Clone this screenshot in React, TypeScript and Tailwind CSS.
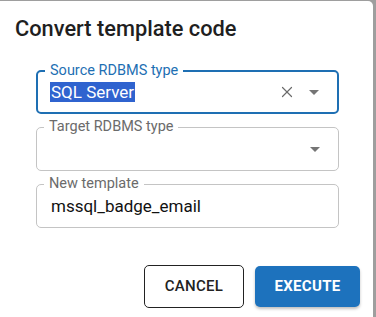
import { X } from "lucide-react";

const Arrow = ({ color = "#757575" }: { color?: string }) => (
    <svg width="10" height="5" viewBox="0 0 10 5" className="shrink-0">
        <path d="M0 0 L5 5 L10 0 Z" fill={color} />
    </svg>
);

const Field = ({
    label,
    focused,
    children
}: {
    label: string;
    focused?: boolean;
    children?: React.ReactNode;
}) => (
    <div
        className={`relative h-[44px] rounded-[5px] flex items-center pl-[14px] pr-[18px] ${
            focused ? "border-2 border-[#1e6fb3]" : "border border-[#c4c4c4]"
        }`}
    >
        <span
            className={`absolute left-[7px] top-[-11px] bg-white px-[5px] text-[14.5px] leading-[20px] ${
                focused ? "text-[#1e6fb3]" : "text-[#6b6b6b]"
            }`}
        >
            {label}
        </span>
        {children}
    </div>
);

export default function App() {
    return (
        <div className="w-[376px] h-[317px] bg-[#9e9e9e] pt-px overflow-hidden" style={{ fontFamily: "Roboto, 'Liberation Sans', sans-serif" }}>
            <div className="w-[373px] h-[330px] bg-white rounded-tr-[5px] flex flex-col">
                {/* Header */}
                <h2 className="pl-[15px] pt-[15px] text-[21.8px] leading-[26px] font-medium text-[#1f1f1f]">
                    Convert template code
                </h2>

                {/* Fields */}
                <div className="pl-[36px] pr-[34px] pt-[28px] flex flex-col gap-[13px]">
                    <Field label="Source RDBMS type" focused>
                        <span className="flex-1 text-[17px] leading-[20px] text-black">
                            <span className="bg-[#2f63cf] text-white px-[1px] -ml-[2px]">SQL Server</span>
                        </span>
                        <X size={18} strokeWidth={1.6} className="text-[#6b6b6b] mr-[13px]" />
                        <Arrow />
                    </Field>
                    <Field label="Target RDBMS type">
                        <span className="flex-1" />
                        <Arrow />
                    </Field>
                    <Field label="New template">
                        <span className="flex-1 text-[17px] leading-[20px] text-[#111]">mssql_badge_email</span>
                    </Field>
                </div>

                {/* Actions */}
                <div className="flex justify-end gap-[11px] pr-[13px] pt-[37px]">
                    <button className="w-[100px] h-[43px] rounded-[5px] border border-[#222] text-[15px] font-medium text-[#222] tracking-[0.3px]">
                        CANCEL
                    </button>
                    <button className="w-[105px] h-[41px] mt-px rounded-[5px] bg-[#1d72bd] text-white text-[15px] font-bold tracking-[0.3px] shadow-[0_2px_3px_rgba(0,0,0,0.25)]">
                        EXECUTE
                    </button>
                </div>
            </div>
        </div>
    );
}
